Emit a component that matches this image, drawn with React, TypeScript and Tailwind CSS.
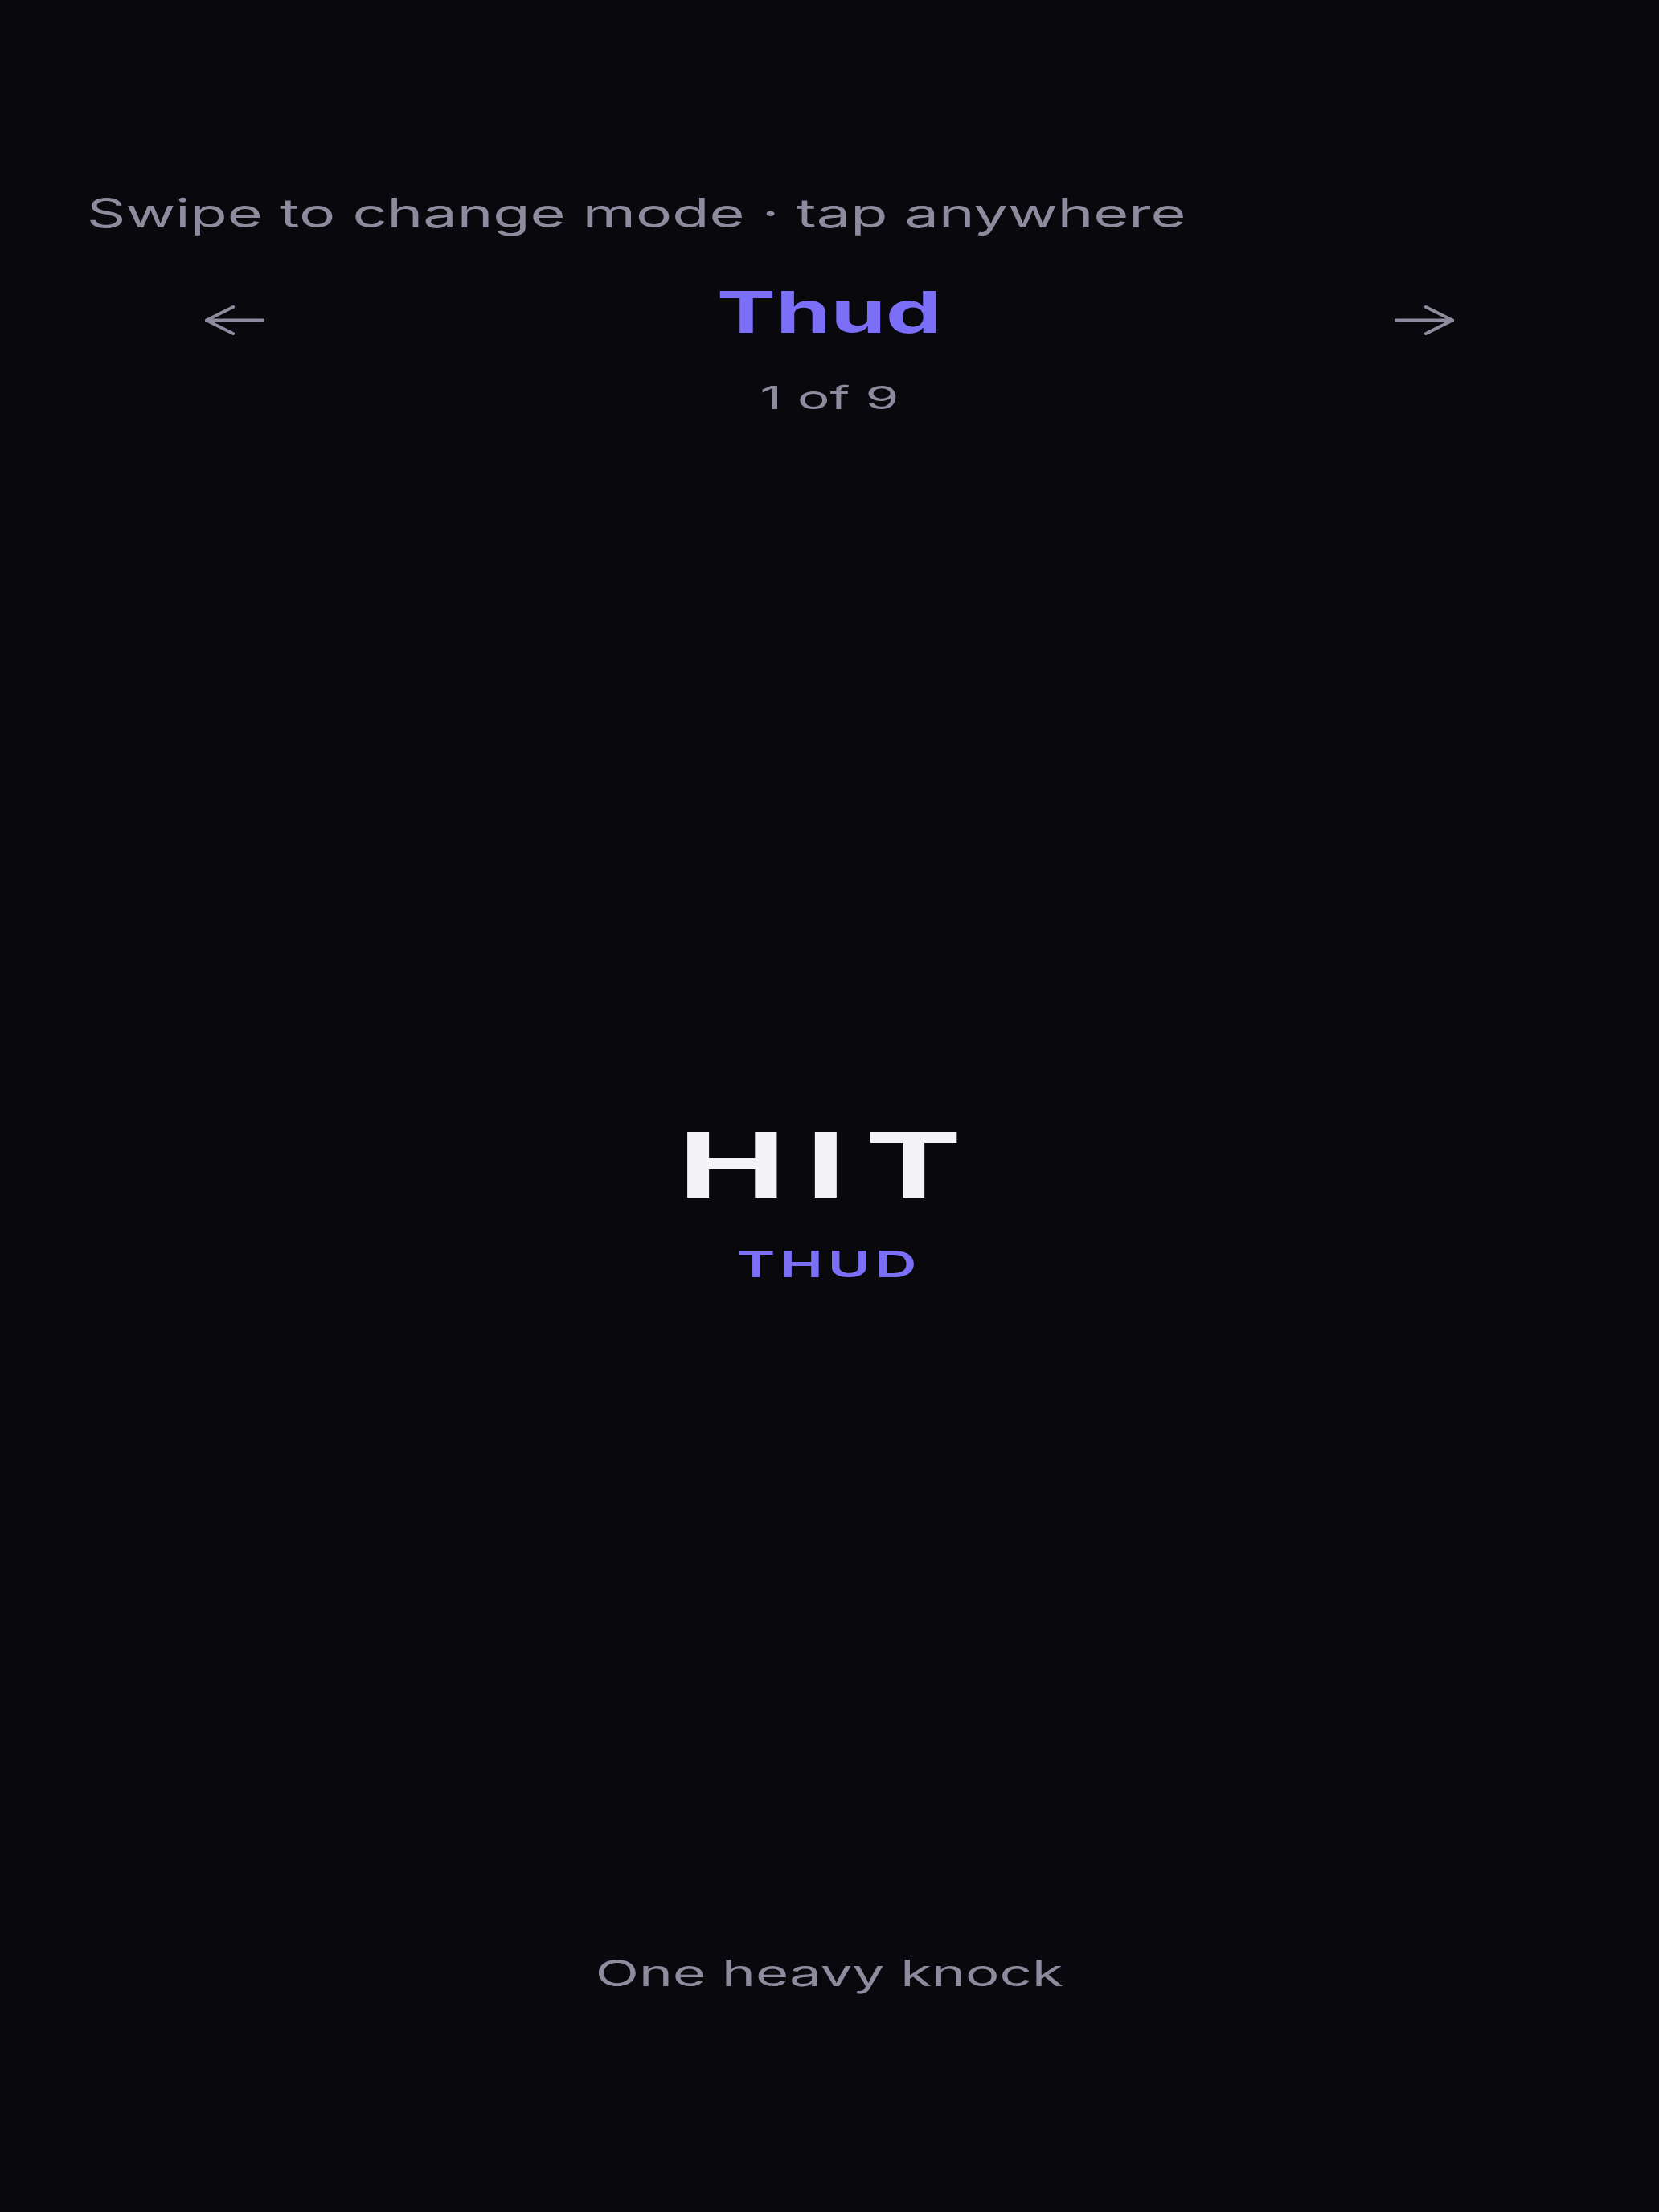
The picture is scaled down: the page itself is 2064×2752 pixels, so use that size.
import React, { useState } from 'react';

const modes = [
  { name: 'Thud', word: 'HIT', tag: 'THUD', hint: 'One heavy knock' },
];

function Arrow({ dir }: { dir: 'left' | 'right' }) {
  return (
    <svg
      width="75"
      height="37"
      viewBox="0 0 75 37"
      fill="none"
      stroke="#8d8b9e"
      strokeWidth="4"
      strokeLinecap="round"
      strokeLinejoin="round"
      className={dir === 'right' ? 'rotate-180' : ''}
    >
      <path d="M3 18.5H73" />
      <path d="M36 2L3 18.5L36 35" />
    </svg>
  );
}

export default function App() {
  const [index] = useState(0);
  const mode = modes[index];

  return (
    <div className="flex h-[2752px] w-full flex-col bg-[#08080d] font-['Inter','Noto_Sans',sans-serif] text-[#8d8b9e]" data-name="Screen">
      {/* Hint */}
      <div className="pl-[108px] pt-[240px]">
        <span className="inline-block origin-left scale-x-[1.51] text-[50px] leading-none whitespace-nowrap">
          Swipe to change mode · tap anywhere
        </span>
      </div>

      {/* Mode switcher */}
      <div className="mt-[62px] grid grid-cols-[1fr_auto_1fr]" data-name="Mode Switcher">
        <button className="flex items-start justify-start pl-[254px] pt-[28px]">
          <Arrow dir="left" />
        </button>
        <span className="inline-block scale-x-[1.527] text-[72px] font-bold leading-none text-[#7b6ef7]">
          {mode.name}
        </span>
        <button className="flex items-start justify-end pr-[254px] pt-[28px]">
          <Arrow dir="right" />
        </button>
      </div>
      <div className="mt-[51px] flex justify-center">
        <span className="inline-block scale-x-[1.73] text-[39px] leading-none">
          {index + 1} of 9
        </span>
      </div>

      {/* Current cue */}
      <div className="mt-[879px] flex flex-col items-center" data-name="Cue">
        <span className="inline-block scale-x-[1.6] text-[113px] font-bold leading-none tracking-[0.13em] text-[#f4f3f8]">
          {mode.word}
        </span>
        <span className="mt-[44px] inline-block scale-x-[1.6] text-[45px] font-semibold leading-none tracking-[0.08em] text-[#7b6ef7]">
          {mode.tag}
        </span>
      </div>

      {/* Description */}
      <div className="mt-[837px] flex justify-center">
        <span className="inline-block scale-x-[1.575] text-[45px] leading-none">
          {mode.hint}
        </span>
      </div>
    </div>
  );
}
